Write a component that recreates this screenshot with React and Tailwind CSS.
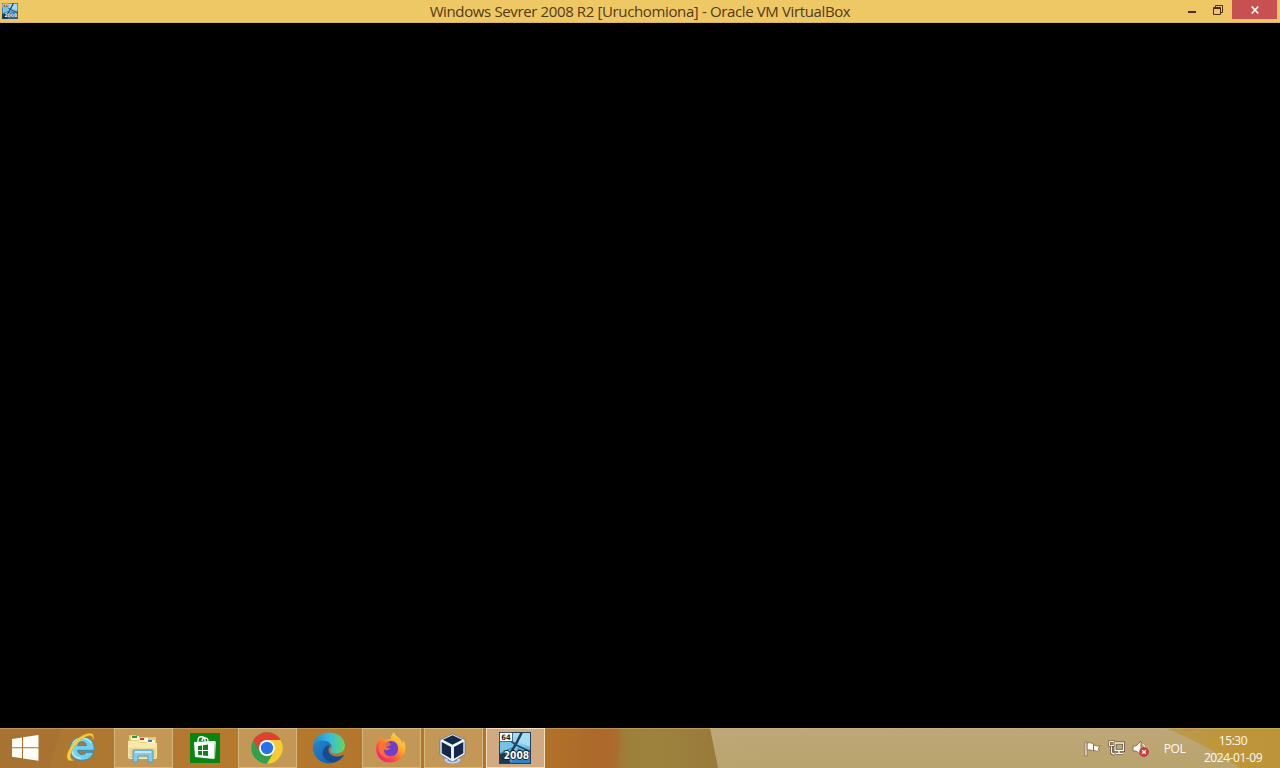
import clsx from 'clsx';

function ServerIcon({ className }) {
  return (
    <svg viewBox="0 0 32 32" className={className}>
      <defs>
        <linearGradient id="serverSky" x1="0.3" y1="0" x2="0.6" y2="1">
          <stop offset="0" stopColor="#b4e4f5" />
          <stop offset="0.5" stopColor="#7ccaea" />
          <stop offset="1" stopColor="#2f86c4" />
        </linearGradient>
      </defs>
      <rect width="32" height="32" fill="url(#serverSky)" />
      <path d="M22 0h10v15l-14-5z" fill="#a5dcf2" />
      <path d="M0 10h17l-5 12-12 2z" fill="#72c4e8" />
      <path d="M19 16l13 6v10H12z" fill="#2c86c6" />
      <path d="M0 22l5-1 4 4 3 7H0z" fill="#22384d" />
      <path d="M23 0l-6 12L9 25" fill="none" stroke="#1e3c57" strokeWidth="2.4" />
      <path d="M12 9l5 4 15 7" fill="none" stroke="#234766" strokeWidth="1.9" />
      <path d="M0 22l13-6" fill="none" stroke="#3a7199" />
      <rect x="0.5" y="0.5" width="31" height="31" fill="none" stroke="#24415b" />
      <rect x="0.5" y="0.5" width="13" height="9" fill="#fff" stroke="#26323c" strokeWidth="0.7" />
      <text x="7" y="7.9" textAnchor="middle" fontFamily="DejaVu Sans, sans-serif" fontSize="7.5" fontWeight="700" fill="#222" textLength="9.5" lengthAdjust="spacingAndGlyphs">64</text>
      <text x="17.5" y="27.4" textAnchor="middle" fontFamily="DejaVu Sans, sans-serif" fontSize="10.2" fontWeight="700" fill="#fff" stroke="#102334" strokeWidth="1.8" paintOrder="stroke" textLength="25.5" lengthAdjust="spacingAndGlyphs">2008</text>
    </svg>
  );
}

function WindowsIcon() {
  return (
    <svg viewBox="0 0 28 26" className="h-[26px] w-7" fill="#fffdf5">
      <path d="M1 4L11 2.5V12.3H1zM12 2.3L27.5 0V12.3H12zM1 13.3H11V23.2L1 21.7zM12 13.3h15.5V25.7L12 23.4z" />
    </svg>
  );
}

function ExplorerIcon() {
  return (
    <svg viewBox="0 0 32 30" className="mt-0.5 h-[30px] w-8">
      <path d="M2 5V2q0-1 1-1h6l1 2h18q1 0 1 1v15H2z" fill="#e8cd73" />
      <path d="M4 2h8v4H4zM12 4h9v4h-9zM20 6h8v4h-8z" fill="#fff8d8" />
      <path d="M5 2h5v2H5z" fill="#20a12b" />
      <path d="M13 4h4v2h-4z" fill="#d43c2e" />
      <path d="M21 6h4v2h-4z" fill="#3187c7" />
      <path d="M1 7h10l2 2h17v14q0 2-2 2H3q-2 0-2-2z" fill="#f8e9a8" />
      <path d="M2 14h27v10H2z" fill="#efd68a" />
      <path d="M6 17q0-1 1-1h18q1 0 1 1v11h-5v-6H11v6H6z" fill="#86c9ea" stroke="#4b9dc9" />
      <path d="M8 18h16" stroke="#d8f4fd" strokeWidth="1.5" />
    </svg>
  );
}

function InternetExplorerIcon() {
  return (
    <svg viewBox="0 0 32 32" className="-mt-0.5 h-8 w-8">
      <path d="M28.5 21.3C26.8 26.5 22.5 29.3 17 29.3 10 29.3 5 24.7 5 17.8S10 6 17 6c7.6 0 12.7 5.3 12.2 13.3H12.6c0 2.7 1.8 4.3 4.5 4.3 2 0 3.4-.9 4.1-2.3zM12.7 14.6h8.7c0-2.4-1.7-3.9-4.3-3.9-2.5 0-4.1 1.5-4.4 3.9z" fill="#72d0f1" stroke="#2b8cbc" strokeWidth="0.9" />
      <path d="M8 12c2-3.5 5-4.7 9-4.7 4.5 0 8 1.7 9.7 5M7 20c1 4.5 4.5 7.2 9 7.7" fill="none" stroke="#b7f0fc" strokeWidth="1.3" />
      <path d="M28 9c1.3-3.7.7-6.2-2.5-6.5C20 1.7 10 8 5 17c-4.4 7.7-4.4 14.5 4 12.3C4 28.5 4.7 23 7.8 18 12 10.8 20 5 24.4 4.5c2.500-.1 3.600 1.200 3.600 4.500z" fill="#fbce3c" stroke="#dba32a" strokeWidth="0.5" />
    </svg>
  );
}

function StoreIcon() {
  return (
    <svg viewBox="0 0 30 30" className="h-[30px] w-[30px]">
      <rect width="30" height="30" fill="#098513" />
      <path d="M8 10V7.5C8 2.5 15 2.5 15 7.5V10M12 8c0-4 6-4.5 6 0v2" fill="none" stroke="#fff" strokeWidth="1.3" />
      <path d="M4 9l21-1-1 18L5 24z" fill="#fff" />
      <path d="M25 8l1 1-1 16-1 1z" fill="#bde5b9" />
      <path d="M8 13l4-.6V17H8zM13 12.2l5-.7V17h-5zM8 18h4v4.3L8 21.8zM13 18h5v5l-5-.6z" fill="#098513" />
    </svg>
  );
}

function ChromeIcon() {
  return (
    <svg viewBox="0 0 32 32" className="h-8 w-8">
      <circle cx="16" cy="16" r="15.7" fill="#34a04b" />
      <path d="M2.5 8.1A15.7 15.7 0 0 1 29.6 8H16a8 8 0 0 0-6.9 12z" fill="#e43e31" />
      <path d="M16 8h13.6A15.7 15.7 0 0 1 16 31.7L22.9 20A8 8 0 0 0 16 8z" fill="#fccb34" />
      <circle cx="16" cy="16" r="8" fill="#fff" />
      <circle cx="16" cy="16" r="6.2" fill="#2a71e5" />
    </svg>
  );
}

function EdgeIcon() {
  return (
    <svg viewBox="0 0 34 32" className="h-8 w-[34px]">
      <defs>
        <linearGradient id="edgeTop" x1="0" x2="1">
          <stop stopColor="#208bd0" />
          <stop offset="0.55" stopColor="#37bddc" />
          <stop offset="1" stopColor="#65d85d" />
        </linearGradient>
        <linearGradient id="edgeLeft" x1="0" x2="0.8" y2="1">
          <stop stopColor="#2584cb" />
          <stop offset="1" stopColor="#1663b4" />
        </linearGradient>
      </defs>
      <path d="M1 14C2 6 8.5.5 17 .5 26 .5 33 6.5 33 13.5c0 5.3-4 8-8.5 8-4 0-6-1.5-5.8-3 .2-1 1.3-1.4 1.3-3.4 0-3.3-4-6.1-9.5-6.1-4.3 0-7.7 2-9.5 5z" fill="url(#edgeTop)" />
      <path d="M1 14c1.5-3.3 5-5.5 9.5-5.5 5.3 0 9 3 9 6.3-1-1-2.8-1.7-4.5-1-7 3.5-4.5 13.2 5.5 17.2C9.5 33.5 0 25 1 14z" fill="url(#edgeLeft)" />
      <path d="M13 15c-5.3 6-1.8 13.3 7.5 16 4.3-.8 8.5-3.5 11-7 .5-.8 0-1.2-.8-.8-8 3.4-14.2-.5-14.2-5.2 0-1.8.8-3 2-3.8-1.7-1-4-.7-5.5.8z" fill="#154c91" />
    </svg>
  );
}

function FirefoxIcon() {
  return (
    <svg viewBox="0 0 32 32" className="h-8 w-8">
      <defs>
        <linearGradient id="foxFire" x1="0.85" y1="0.1" x2="0.2" y2="0.9">
          <stop stopColor="#ffe04a" />
          <stop offset="0.4" stopColor="#ffa02a" />
          <stop offset="0.7" stopColor="#fb5840" />
          <stop offset="1" stopColor="#ec2a74" />
        </linearGradient>
      </defs>
      <path d="M4 9l1-5 4 4q4-1 7-1c-1-2 1-5 3-6.8 1 4 5.5 5.5 7 8.2.8 1.2 1 2.4 1 3.5l1.5-3.5c2.5 5 2.8 10-.5 15C22 33 6 33 2 22 .2 17 1 12 4 9z" fill="url(#foxFire)" />
      <path d="M9.5 13.5Q11 9.5 16 9c5 0 7.5 4 7 8.5-.5 5-4 7-8 6.5-3.5-.4-6-3-6-6.5 2 1.5 4.5 1 6-1.5-3 .5-5-.5-5.5-2.5z" fill="#6c3fd0" />
      <path d="M5 10c1-1 4-2 6 1 2-1 4 0 5 1-1 2-3 2.5-4.5 3 .5 1-.8 2-3 2.5C9 23 12 25 16 25c-4 2.5-10-.5-12-6-1-3-.5-7 1-9z" fill="#ff7a2b" opacity="0.75" />
    </svg>
  );
}

function VirtualBoxIcon() {
  return (
    <svg viewBox="0 0 28 32" className="h-[31px] w-[27px]">
      <path d="M8 25h12l3 3q-3 4-9 4t-9-4z" fill="#cad7eb" stroke="#8795b4" strokeWidth="0.7" />
      <path d="M9 28q5 2 10 0" fill="none" stroke="#7288b7" strokeWidth="1.6" />
      <path d="M14 .8L27 7v15l-13 8L1 22V7z" fill="#edf5ff" stroke="#526782" strokeWidth="0.7" />
      <path d="M14 2.2l10 4.6-10 5.2L4 6.8zM2.8 9.2l9.7 5.3v12L2.8 20.8zM15.5 14.5l9.7-5.3v11.6l-9.7 5.7z" fill="#152849" />
    </svg>
  );
}

const apps = [
  { name: 'Internet Explorer', icon: <InternetExplorerIcon /> },
  { name: 'Eksplorator plików', icon: <ExplorerIcon />, running: true },
  { name: 'Sklep', icon: <StoreIcon /> },
  { name: 'Google Chrome', icon: <ChromeIcon />, running: true },
  { name: 'Microsoft Edge', icon: <EdgeIcon /> },
  { name: 'Firefox', icon: <FirefoxIcon />, running: true },
  { name: 'Oracle VM VirtualBox', icon: <VirtualBoxIcon />, running: true },
  { name: 'Windows Sevrer 2008 R2', icon: <ServerIcon className="h-8 w-8" />, active: true },
];

function TitleBar() {
  return (
    <header className="grid h-[23px] shrink-0 grid-cols-[1fr_auto_1fr] border-b border-[#d6b460] bg-[#efc866]">
      <div className="pt-[3px] pl-0.5">
        <ServerIcon className="h-4 w-4" />
      </div>
      <h1 className="w-[422px] text-center text-[15px] leading-[23px] tracking-[-0.37px] whitespace-nowrap text-[#513b14]">
        Windows Sevrer 2008 R2 [Uruchomiona] - Oracle VM VirtualBox
      </h1>
      <div className="flex justify-end pr-[3px]">
        <button aria-label="Minimalizuj" className="flex h-[19px] w-[26px] items-end justify-center pb-[6px]">
          <span className="h-0.5 w-2 bg-[#4d2b17]" />
        </button>
        <button aria-label="Przywróć" className="flex h-[19px] w-[27px] items-center justify-center pr-0.5">
          <svg viewBox="0 0 10 10" className="h-2.5 w-2.5" fill="none" stroke="#4d2b17">
            <path d="M2.5 2V.5h7v7H8M.5 2.5h7v7h-7zM.5 3.5h7" />
          </svg>
        </button>
        <button aria-label="Zamknij" className="flex h-[19px] w-[45px] items-center justify-center bg-[#c75050]">
          <svg viewBox="0 0 8 8" className="h-2 w-2" fill="none" stroke="#fff" strokeWidth="1.6">
            <path d="M.7.5l6.6 7M7.3.5l-6.6 7" />
          </svg>
        </button>
      </div>
    </header>
  );
}

function Wallpaper() {
  return (
    <svg viewBox="0 0 1280 40" preserveAspectRatio="none" className="absolute inset-0 h-full w-full">
      <defs>
        <linearGradient id="wallLeft" x1="0" x2="1">
          <stop stopColor="#aa7634" />
          <stop offset="0.35" stopColor="#b47a2e" />
          <stop offset="0.85" stopColor="#b17429" />
          <stop offset="0.96" stopColor="#ac682b" />
          <stop offset="1" stopColor="#a67434" />
        </linearGradient>
        <linearGradient id="wallMiddle" x1="0" x2="1">
          <stop stopColor="#a57434" />
          <stop offset="0.1" stopColor="#9c8139" />
          <stop offset="0.4" stopColor="#9d823e" />
          <stop offset="1" stopColor="#98793b" />
        </linearGradient>
        <linearGradient id="wallRight" x1="0" x2="0.1" y1="0" y2="1">
          <stop stopColor="#bfa878" />
          <stop offset="1" stopColor="#b9a36e" />
        </linearGradient>
        <linearGradient id="wallCorner" x1="0" x2="1">
          <stop stopColor="#b99a55" />
          <stop offset="0.5" stopColor="#bf9638" />
          <stop offset="1" stopColor="#bd943a" />
        </linearGradient>
      </defs>
      <rect width="630" height="40" fill="url(#wallLeft)" />
      <path d="M0 0h61L49 40H0z" fill="#a77232" />
      <path d="M620 0h104v40H618z" fill="url(#wallMiddle)" />
      <path d="M710 0h570v40H718z" fill="url(#wallRight)" />
      <path d="M1166 0h114v40h-40q-30-21-74-40z" fill="url(#wallCorner)" />
      <path d="M1180 0h20l-14 4z" fill="#c58b42" />
      <path d="M0 .5h1280" stroke="#d5bd88" opacity="0.45" />
    </svg>
  );
}

function Tray() {
  return (
    <div className="ml-auto flex items-center text-xs text-[#fffaf0]">
      <svg viewBox="0 0 17 16" className="mt-0.5 h-4 w-[17px]" fill="#fffaf0" stroke="#6c5337" strokeWidth="0.6">
        <path d="M1 1h2v14H1zM3 2q3-1 6.5 1v7Q6 8 3 9zM9.5 4q3 1.5 6.5 1l-2 3 2 1.5q-3.5 1.5-6.5-.5z" />
      </svg>
      <svg viewBox="0 0 17 16" className="ml-[7px] h-4 w-[17px]" fill="none">
        <path d="M7 3h8.5v7.5H7zM11 11v2.5M8 13.5h7M3.5 6v6q0 2 3 2" stroke="#604d35" strokeWidth="3" />
        <path d="M7 3h8.5v7.5H7zM11 11v2.5M8 13.5h7M3.5 6v6q0 2 3 2" stroke="#fffaf0" strokeWidth="1.3" />
        <path d="M1.5 1.5h4.5v4H1.5z" fill="#a29269" stroke="#604d35" strokeWidth="2" />
        <path d="M1.5 1.5h4.5v4H1.5z" stroke="#fffaf0" />
      </svg>
      <svg viewBox="0 0 17 17" className="mt-px ml-[7px] h-[17px] w-[17px]">
        <path d="M1 6h3l5-5v14l-5-4H1z" fill="#fffaf0" stroke="#705d43" strokeWidth="0.8" />
        <path d="M11 4q2 2 2 5" fill="none" stroke="#fff5dd" />
        <circle cx="12" cy="12" r="4.5" fill="#d3393a" stroke="#ab3028" strokeWidth="0.6" />
        <path d="M10.2 10.2l3.6 3.6M13.8 10.2l-3.6 3.6" stroke="#fff" strokeWidth="1.4" />
      </svg>
      <span className="mt-px ml-[14px] w-[23px] text-center text-xs tracking-[-0.4px]">POL</span>
      <time className="mt-0.5 flex w-[94px] flex-col text-center text-xs leading-[17px] tracking-[-0.45px]">
        <span>15:30</span>
        <span>2024-01-09</span>
      </time>
    </div>
  );
}

function TaskButton({ app }) {
  return (
    <button
      aria-label={app.name}
      className={clsx(
        'flex h-10 w-[59px] items-center justify-center border pr-0.5',
        app.active && 'border-[#f3dfc2] bg-[#d1aa82]',
        app.running && 'border-[#d8b77e] bg-[#c39856]',
        !app.active && !app.running && 'border-transparent'
      )}
    >
      {app.icon}
    </button>
  );
}

export default function App() {
  return (
    <div className="flex h-screen w-full flex-col overflow-hidden bg-black font-['Open_Sans',sans-serif]">
      <TitleBar />
      <main className="flex-1 bg-black" />
      <footer className="relative h-10 shrink-0">
        <Wallpaper />
        <div className="relative flex h-full">
          <button aria-label="Start" className="flex w-[52px] items-center justify-center pr-[3px]">
            <WindowsIcon />
          </button>
          <nav className="flex gap-[3px]">
            {apps.map((app) => (
              <TaskButton key={app.name} app={app} />
            ))}
          </nav>
          <Tray />
        </div>
      </footer>
    </div>
  );
}
